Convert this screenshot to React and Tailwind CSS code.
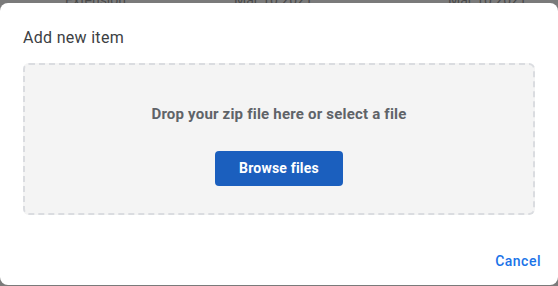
import React from 'react';

const App = () => {
    return (
        <div className="w-[558px] h-[286px] overflow-hidden bg-[#7a7a7a] font-['Roboto',sans-serif]">
            {/* Backdrop list row, almost fully covered */}
            <div className="h-[3px] overflow-hidden flex items-end text-[14px] text-[#4a4a4a]">
                <div className="flex leading-[14px] mb-[-4px] w-full">
                    <span className="ml-[65px] w-[169px]">Extension</span>
                    <span className="w-[214px]">Mar 10 2021</span>
                    <span>Mar 10 2021</span>
                </div>
            </div>

            {/* Dialog */}
            <div className="h-[282px] bg-white rounded-[8px] flex flex-col px-[23px]">
                <h2 className="mt-[24px] text-[16px] leading-[21px] text-[#3c4043] tracking-[0.3px]">Add new item</h2>

                <div className="mt-[15px] h-[152px] bg-[#f4f4f4] border-2 border-dashed border-[#dadce0] rounded-[6px] flex flex-col items-center">
                    <p className="mt-[39px] text-[15px] leading-[20px] font-bold text-[#5f6368] tracking-[0.2px]">
                        Drop your zip file here or select a file
                    </p>
                    <button className="mt-[27px] w-[128px] h-[35px] bg-[#1b5fbe] rounded-[4px] text-white text-[14px] font-bold tracking-[0.2px]">
                        Browse files
                    </button>
                </div>

                <div className="mt-auto mb-[13px] flex justify-end">
                    <button className="mr-[-6px] text-[14px] font-medium text-[#1a73e8] tracking-[0.5px]">Cancel</button>
                </div>
            </div>
        </div>
    );
};

export default App;
